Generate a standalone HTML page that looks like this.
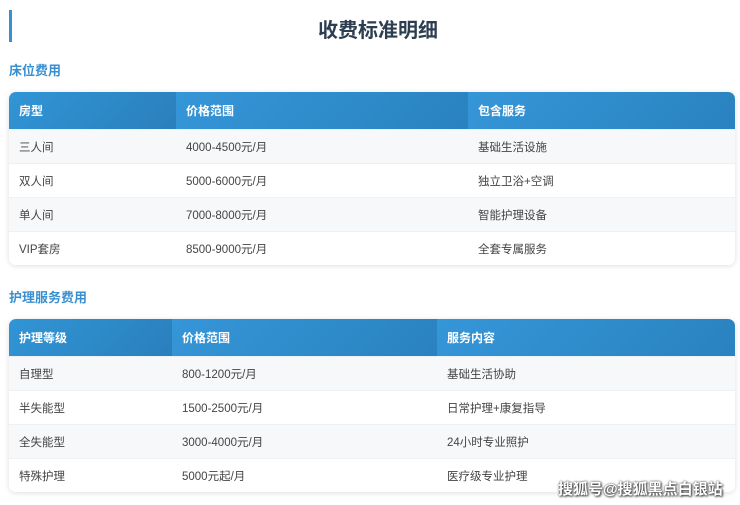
<!DOCTYPE html>
<html><head><meta charset="utf-8"><style>
body{margin:0;width:740px;height:505px;background:#fff;font-family:"Liberation Sans","Noto Sans CJK SC",sans-serif;position:relative;overflow:hidden}
.bar{position:absolute;left:9px;top:10px;width:3px;height:32px;background:#3a8fd0}
h1{position:absolute;left:16px;right:0;top:14px;margin:0;text-align:center;font-size:20px;color:#2c3e50;font-weight:bold}
h2{position:absolute;left:9px;margin:0;font-size:13px;color:#3a8fd0;font-weight:bold}
table{position:absolute;left:9px;width:726px;border-collapse:collapse;border-radius:7px;overflow:hidden;box-shadow:0 1px 6px rgba(0,0,0,.13);font-size:11.5px;color:#444}
th{height:37px;padding:0 0 0 10px;text-align:left;color:#fff;font-size:12px;font-weight:bold;background:linear-gradient(135deg,#3596d8,#2a82bf)}
th:first-child{background:linear-gradient(135deg,#3195d6,#2a7fbb)}
td{height:33px;padding:0 0 0 10px;border-top:1px solid #eef1f4}
tr:nth-child(odd) td{background:#f6f8fa}
tr:nth-child(even) td{background:#fff}
.wm{position:absolute;left:558px;top:478px;font-size:15px;font-weight:bold;color:#fff;text-shadow:0 0 2px #333,1px 1px 2px #333}
</style></head><body>
<div class="bar"></div>
<h1>收费标准明细</h1>
<h2 style="top:60px">床位费用</h2>
<table style="top:92px">
<thead><tr><th style="width:157px">房型</th><th style="width:282px">价格范围</th><th>包含服务</th></tr></thead>
<tbody>
<tr><td>三人间</td><td>4000-4500元/月</td><td>基础生活设施</td></tr>
<tr><td>双人间</td><td>5000-6000元/月</td><td>独立卫浴+空调</td></tr>
<tr><td>单人间</td><td>7000-8000元/月</td><td>智能护理设备</td></tr>
<tr><td>VIP套房</td><td>8500-9000元/月</td><td>全套专属服务</td></tr>
</tbody></table>
<h2 style="top:287px">护理服务费用</h2>
<table style="top:319px">
<thead><tr><th style="width:153px">护理等级</th><th style="width:255px">价格范围</th><th>服务内容</th></tr></thead>
<tbody>
<tr><td>自理型</td><td>800-1200元/月</td><td>基础生活协助</td></tr>
<tr><td>半失能型</td><td>1500-2500元/月</td><td>日常护理+康复指导</td></tr>
<tr><td>全失能型</td><td>3000-4000元/月</td><td>24小时专业照护</td></tr>
<tr><td>特殊护理</td><td>5000元起/月</td><td>医疗级专业护理</td></tr>
</tbody></table>
<div class="wm">搜狐号@搜狐黑点白银站</div>
</body></html>
